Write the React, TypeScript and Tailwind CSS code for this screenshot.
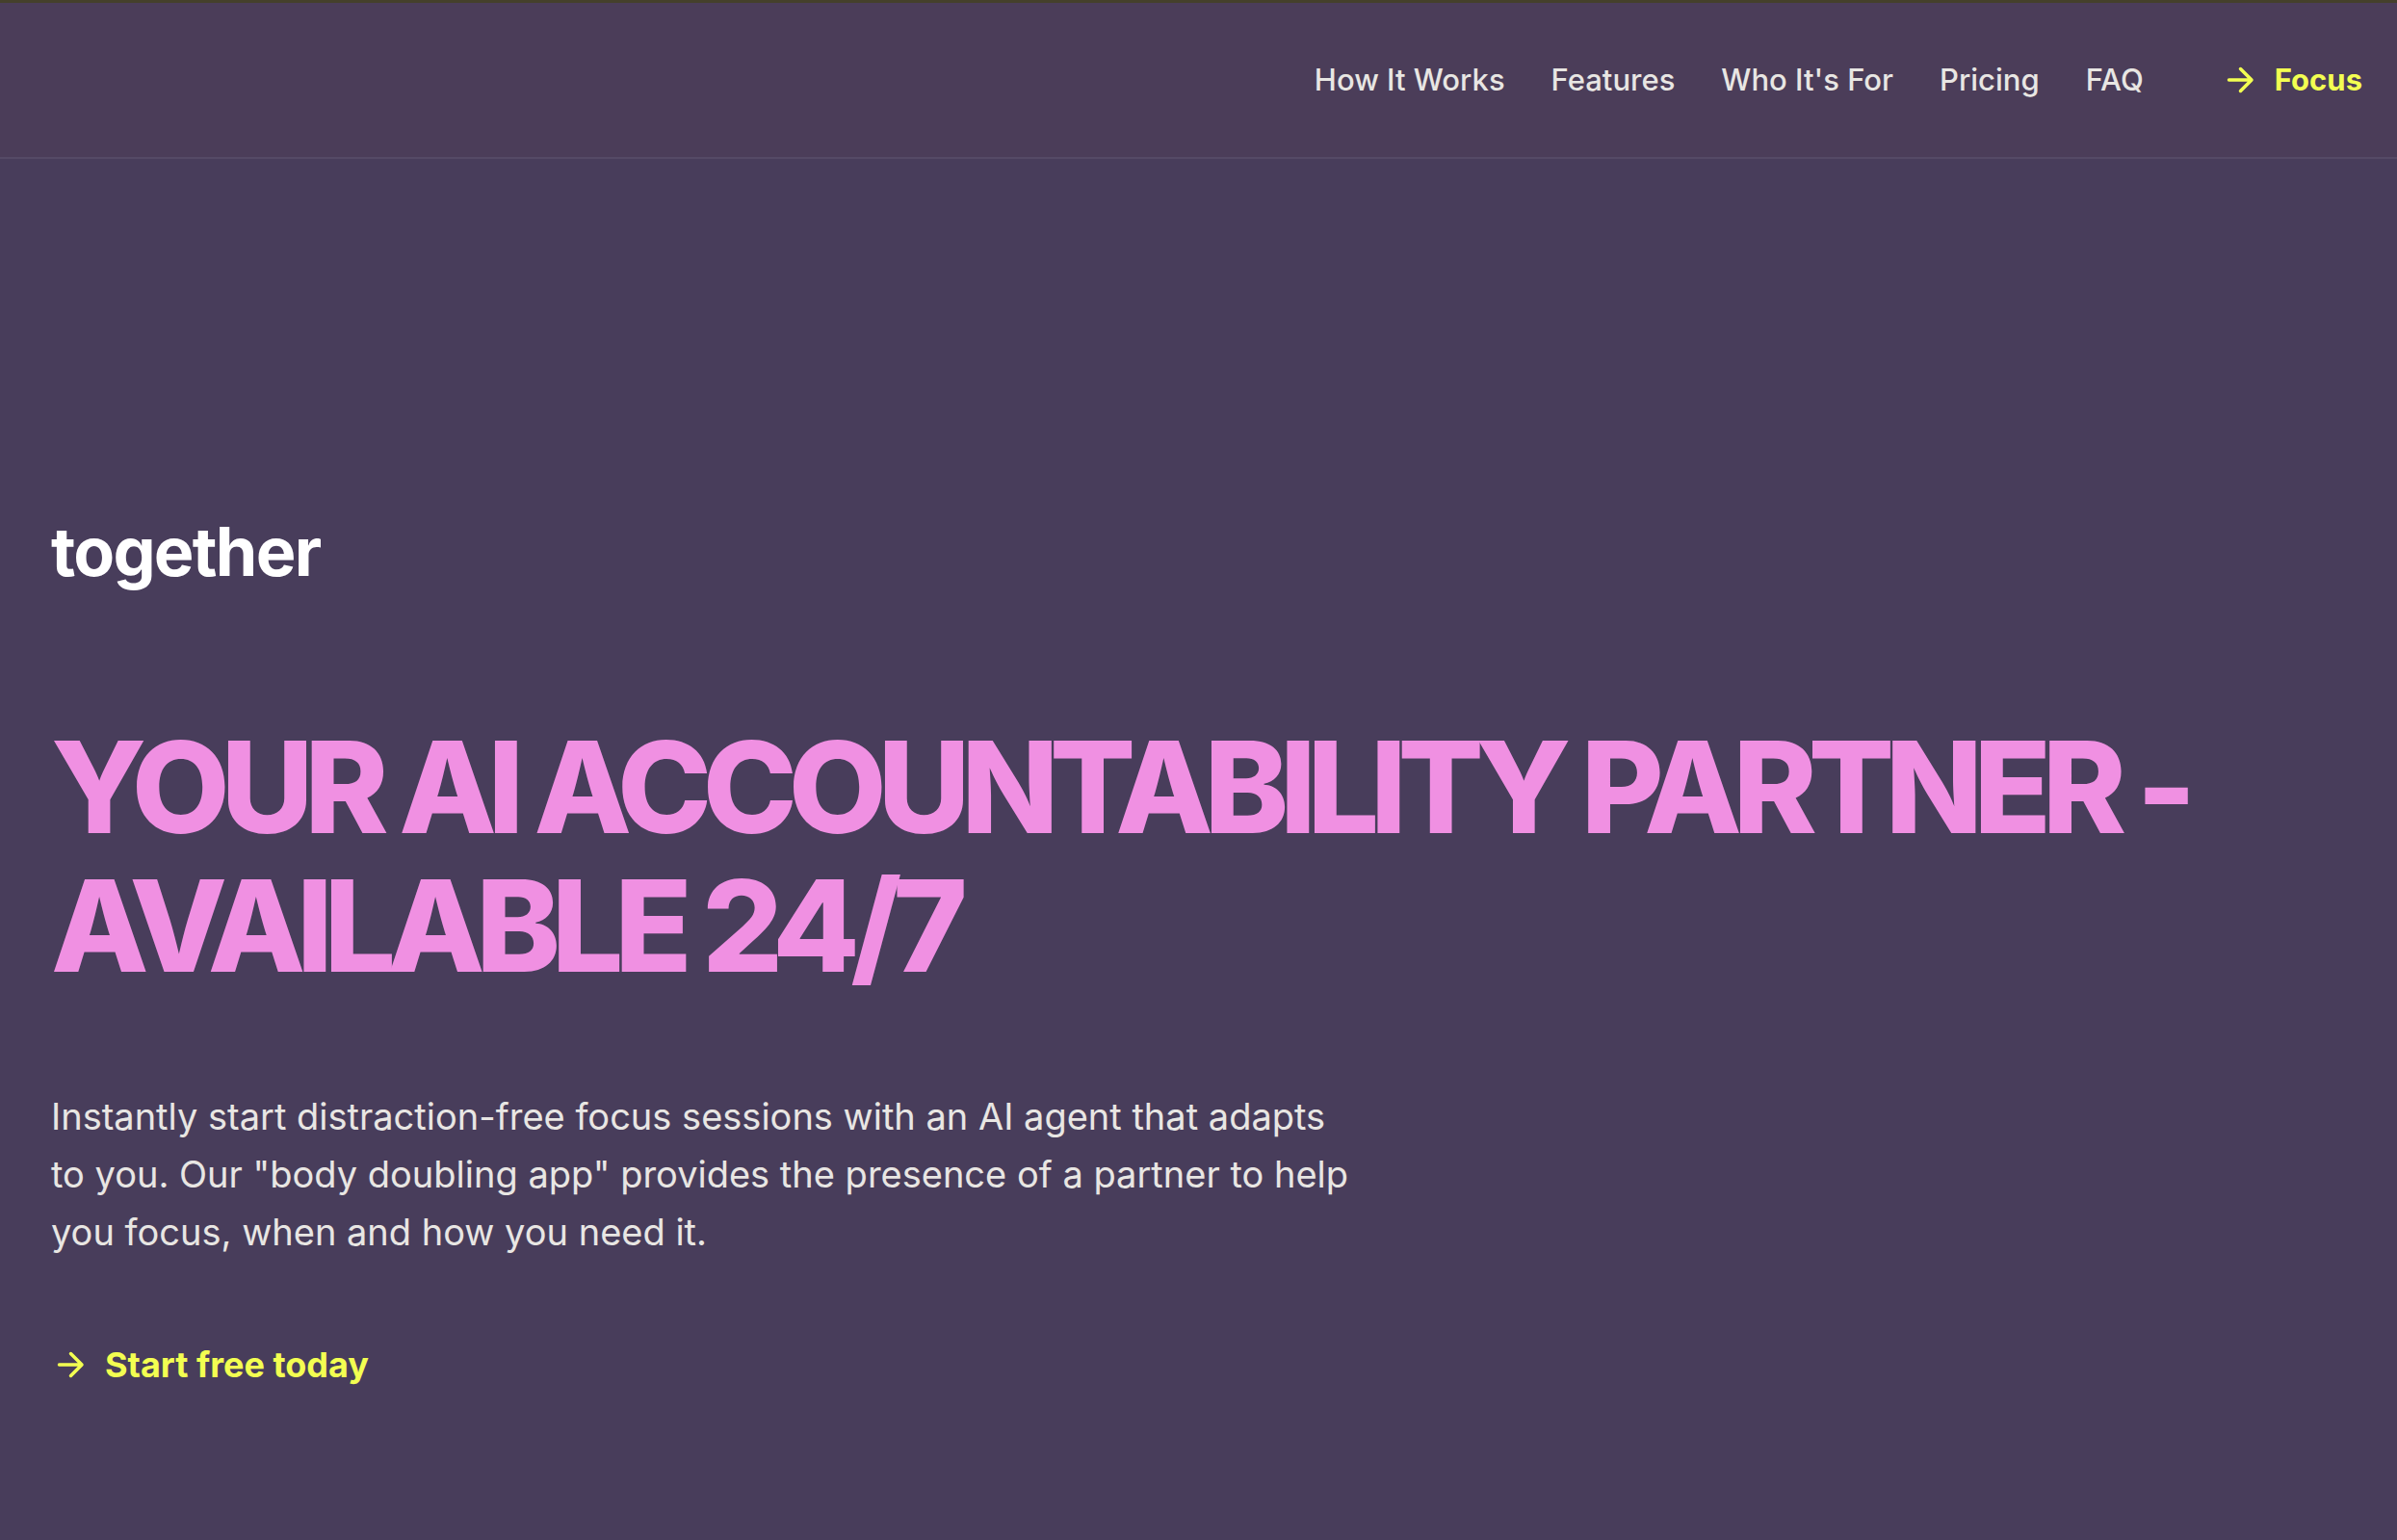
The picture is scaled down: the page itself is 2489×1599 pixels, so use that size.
import React from "react";

const links = [
  { label: "How It Works", href: "#how-it-works" },
  { label: "Features", href: "#features" },
  { label: "Who It's For", href: "#who-its-for" },
  { label: "Pricing", href: "#pricing" },
  { label: "FAQ", href: "#faq" },
];

function Arrow() {
  return (
    <svg
      viewBox="0 0 40 40"
      className="size-10 shrink-0"
      fill="none"
      stroke="currentColor"
      strokeWidth="3.5"
      strokeLinecap="round"
      strokeLinejoin="round"
      aria-hidden="true"
    >
      <path d="M8.5 20H31.5M20.5 8.5L32 20L20.5 31.5" />
    </svg>
  );
}

export default function App() {
  return (
    <div className="min-h-screen bg-[#483d5b] font-['Inter',sans-serif] text-[#e8e6e3]">
      <header className="border-t-3 border-b-2 border-t-[#45402b] border-b-[#554a66] bg-[#4b3d59]">
        <div className="flex h-40 items-center justify-end gap-20 pr-9">
          <nav className="flex gap-12 text-[31px] leading-10 font-medium">
            {links.map((l) => (
              <a key={l.href} href={l.href}>
                {l.label}
              </a>
            ))}
          </nav>
          <a href="#focus" className="flex items-center gap-4 text-[31px] leading-10 font-bold text-[#f3ff51]">
            <Arrow />
            Focus
          </a>
        </div>
      </header>
      <main className="px-[53px] pt-[364px] pb-32">
        <p className="text-[70px] leading-[88px] font-bold tracking-tight text-white">together</p>
        <h1 className="mt-32 text-[132px] leading-[144px] font-extrabold tracking-[-0.07em] text-[#f090e2] uppercase">
          Your AI accountability partner - available 24/7
        </h1>
        <p className="mt-24 max-w-[1360px] text-[38px] leading-[60px]">
          Instantly start distraction-free focus sessions with an AI agent that adapts to you. Our "body doubling app"
          provides the presence of a partner to help you focus, when and how you need it.
        </p>
        <a
          href="#start"
          className="mt-20 inline-flex items-center gap-4 text-[36px] leading-14 font-bold text-[#f3ff51]"
        >
          <Arrow />
          Start free today
        </a>
      </main>
    </div>
  );
}
